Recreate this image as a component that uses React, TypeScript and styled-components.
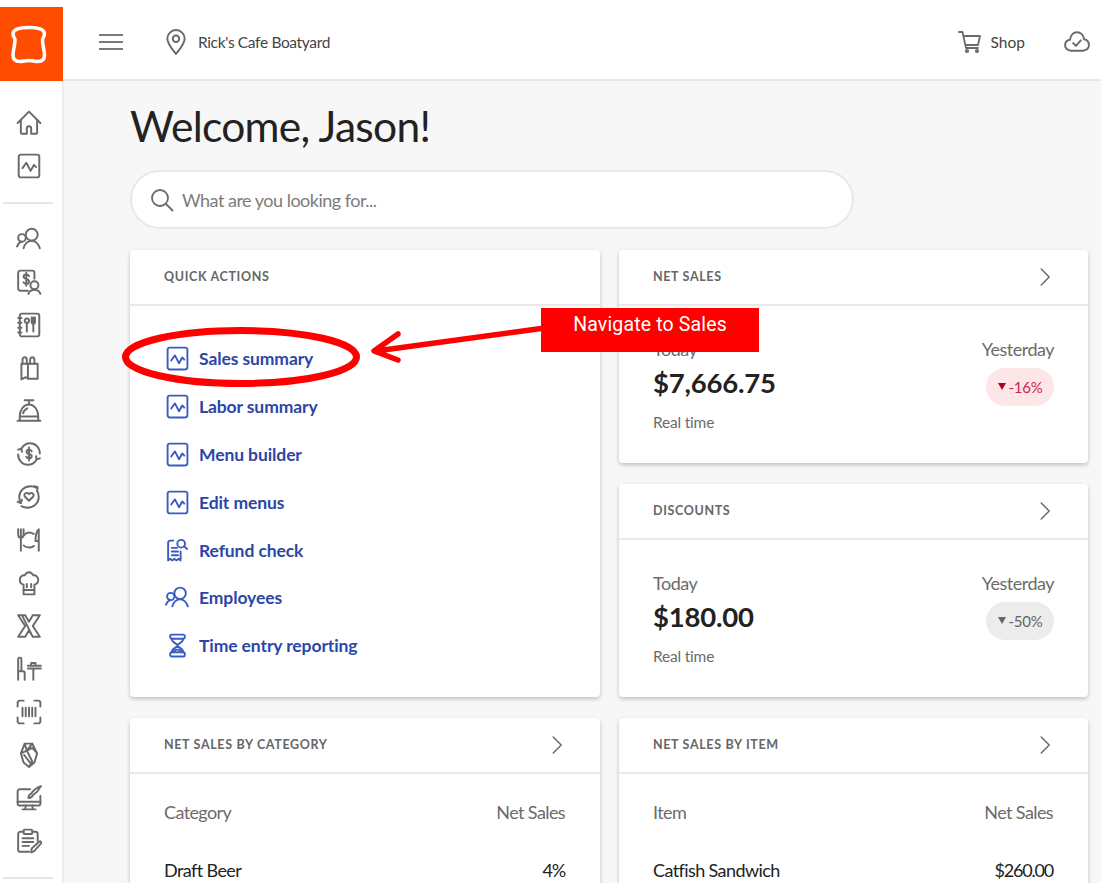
import React from "react";
import styled, { createGlobalStyle } from "styled-components";

const GlobalStyle = createGlobalStyle`
  html, body {
    margin: 0;
    height: 100%;
    background: #fff;
    overflow: hidden;
  }
  * {
    box-sizing: border-box;
  }
`;

const Frame = styled.div`
  position: relative;
  width: 1101px;
  height: 883px;
  padding-top: 7px;
  overflow: hidden;
  display: flex;
  flex-direction: column;
  font-family: "Lato", "Noto Sans", sans-serif;
  color: #222;
`;

const TopBar = styled.header`
  flex: none;
  height: 74px;
  display: flex;
  align-items: center;
  background: #fff;
  border-bottom: 2px solid #e8e8e8;
  padding-right: 11px;
  padding-bottom: 2px;
`;

const Logo = styled.div`
  width: 63px;
  height: 74px;
  margin-bottom: -4px;
  background: #ff4c00;
  align-self: flex-start;
`;

const Burger = styled.svg`
  margin-left: 36px;
  width: 24px;
  height: 18px;
`;

const Location = styled.div`
  display: flex;
  align-items: center;
  gap: 9px;
  margin-left: 40px;
  font-size: 15.5px;
  letter-spacing: -0.35px;
  color: #444;
`;

const TopRight = styled.div`
  margin-left: auto;
  display: flex;
  align-items: center;
`;

const Shop = styled.div`
  display: flex;
  align-items: center;
  gap: 9px;
  margin-right: 39px;
  font-size: 15.5px;
  color: #444;
`;

const Body = styled.div`
  flex: 1;
  display: flex;
  min-height: 0;
`;

const SideBar = styled.nav`
  flex: none;
  width: 64px;
  padding-top: 20px;
  background: #fff;
  border-right: 2px solid #ececec;
  display: flex;
  flex-direction: column;
`;

const SideItem = styled.div`
  flex: none;
  height: 43px;
  padding-right: 5px;
  display: flex;
  align-items: center;
  justify-content: center;
`;

const SideDivider = styled.hr<{ $top: number; $bottom: number }>`
  flex: none;
  width: 50px;
  height: 2px;
  margin: ${({ $top }) => $top}px 0 ${({ $bottom }) => $bottom}px 3px;
  border: 0;
  background: #e6e6e6;
`;

const Main = styled.main`
  flex: 1;
  min-width: 0;
  background: #f7f7f7;
  padding: 19px 13px 0 66px;
`;

const Title = styled.h1`
  margin: 0 0 17px;
  height: 53px;
  font-size: 42.5px;
  line-height: 51px;
  font-weight: 400;
  letter-spacing: -0.7px;
  color: #222;
`;

const Search = styled.div`
  width: 724px;
  height: 59px;
  padding-left: 18px;
  display: flex;
  align-items: center;
  gap: 8px;
  background: #fff;
  border: 2px solid #e8e8e8;
  border-radius: 30px;
  font-size: 18px;
  letter-spacing: -0.5px;
  color: #7c7c7c;
`;

const Grid = styled.div`
  margin-top: 21px;
  display: grid;
  grid-template-columns: 470px 469px;
  grid-template-rows: 213px 213px auto;
  gap: 21px 19px;
`;

const Card = styled.section<{ $span?: number }>`
  grid-row: span ${({ $span }) => $span ?? 1};
  background: #fff;
  border-radius: 4px;
  box-shadow: 0 2px 4px rgba(0, 0, 0, 0.22);
  min-height: 165px;
`;

const CardHeader = styled.div`
  height: 56px;
  padding: 0 33px 0 34px;
  display: flex;
  align-items: center;
  justify-content: space-between;
  border-bottom: 2px solid #e8e8e8;
`;

const CardTitle = styled.h2`
  margin: 0;
  font-size: 12.5px;
  line-height: 14px;
  font-weight: 700;
  letter-spacing: 0.65px;
  text-transform: uppercase;
  color: #666;
`;

const ActionList = styled.ul`
  margin: 0;
  padding: 29px 34px 0 35px;
  list-style: none;
`;

const ActionRow = styled.li`
  height: 47.8px;
  display: flex;
  align-items: center;
  gap: 9px;
  font-size: 17.5px;
  font-weight: 700;
  letter-spacing: -0.1px;
  color: #2c46a8;
`;

const StatBody = styled.div`
  padding: 31px 34px 0;
  display: flex;
  justify-content: space-between;
`;

const StatColumn = styled.div<{ $end?: boolean }>`
  display: flex;
  flex-direction: column;
  align-items: ${({ $end }) => ($end ? "flex-end" : "flex-start")};
`;

const StatLabel = styled.div`
  height: 24px;
  font-size: 18px;
  line-height: 24px;
  letter-spacing: -0.5px;
  color: #6b6b6b;
`;

const StatValue = styled.div`
  margin-top: 4px;
  height: 36px;
  font-size: 27.5px;
  line-height: 36px;
  font-weight: 700;
  letter-spacing: -0.2px;
  color: #222;
`;

const StatNote = styled.div`
  margin-top: 10px;
  font-size: 15.5px;
  line-height: 22px;
  letter-spacing: -0.2px;
  color: #6b6b6b;
`;

const Badge = styled.div<{ $tone: "down" | "flat" }>`
  margin-top: 7px;
  height: 38px;
  width: 68px;
  padding-bottom: 1px;
  display: flex;
  align-items: center;
  justify-content: center;
  gap: 3px;
  border-radius: 19px;
  font-size: 15px;
  letter-spacing: -0.3px;
  background: ${({ $tone }) => ($tone === "down" ? "#fde6e8" : "#ececec")};
  color: ${({ $tone }) => ($tone === "down" ? "#d0244a" : "#666")};
`;

const Triangle = styled.span<{ $tone: "down" | "flat" }>`
  width: 0;
  height: 0;
  border-left: 4.5px solid transparent;
  border-right: 4.5px solid transparent;
  border-top: 7px solid ${({ $tone }) => ($tone === "down" ? "#b00020" : "#666")};
`;

const TableBody = styled.div`
  padding: 25px 35px 0 34px;
`;

const TableRow = styled.div<{ $head?: boolean }>`
  height: ${({ $head }) => ($head ? 58 : 30)}px;
  display: flex;
  justify-content: space-between;
  font-size: 18px;
  line-height: 26px;
  letter-spacing: -0.6px;
  color: ${({ $head }) => ($head ? "#6b6b6b" : "#222")};
`;

const Amount = styled.span`
  letter-spacing: -1.2px;
`;

const Annotation = styled.svg`
  position: absolute;
  left: 0;
  top: 0;
  pointer-events: none;
`;

const Callout = styled.div`
  position: absolute;
  left: 541px;
  top: 308px;
  width: 218px;
  height: 44px;
  padding-top: 5px;
  background: #f00;
  color: #fff;
  font-family: "Roboto", sans-serif;
  font-size: 19.5px;
  line-height: 24px;
  letter-spacing: 0.15px;
  text-align: center;
`;

const Glyph = styled.svg<{ $color?: string; $size?: number }>`
  flex: none;
  width: ${({ $size }) => $size ?? 26}px;
  height: ${({ $size }) => $size ?? 26}px;
  fill: none;
  stroke: ${({ $color }) => $color ?? "#6a6a6a"};
  stroke-width: 1.8;
  stroke-linecap: round;
  stroke-linejoin: round;
`;

type IconProps = { color?: string; size?: number; children: React.ReactNode };

const Icon = ({ color, size, children }: IconProps) => (
  <Glyph viewBox="0 0 24 24" $color={color} $size={size}>
    {children}
  </Glyph>
);

const home = <path d="M1.5 12 12 1.5 22.5 12M4.5 9.5V21a1 1 0 0 0 1 1H10v-5a2 2 0 0 1 4 0v5h4.500a1 1 0 0 0 1-1V9.500" />;
const pulse = (
  <>
    <rect x="2.5" y="1.5" width="19" height="21" rx="2" />
    <path d="m6 14 3.500-5 4 7.500 3-5.500 2 2" />
  </>
);
const people = (
  <>
    <circle cx="14.5" cy="8" r="5.5" />
    <circle cx="5.5" cy="11" r="3.5" />
    <path d="M7 20.500c1-4 3-6.500 7.500-7 3.500.5 6 2.500 7.500 7M1 19c.5-2 1.500-3.500 4-4.500" />
  </>
);
const dollarPerson = (
  <>
    <path d="M11 20H4a2 2 0 0 1-2-2V3.500a2 2 0 0 1 2-2h11a2 2 0 0 1 2 2V9" />
    <path d="M12 6.500c-.5-1-1.500-1.500-2.500-1.500C8 5 7 5.800 7 7s1 1.800 2.500 2.200S12 10.300 12 11.500 11 13.800 9.500 13.800c-1 0-2-.5-2.500-1.500M9.500 3.500v12" />
    <circle cx="17" cy="15" r="3.700" />
    <path d="M11.500 23c.5-2 2-3.500 5.500-3.800 3.500.3 5 1.800 5.500 3.800" />
  </>
);
const menuBook = (
  <>
    <rect x="3.500" y="1.500" width="18" height="21" rx="2" />
    <path d="M2 5.500h3M2 10h3M2 14.500h3M2 19h3" />
    <circle cx="10" cy="8" r="2" />
    <path d="M10 10v8M14.500 5v4c0 1.500 1 2 1.500 2s1.500-.5 1.500-2V5M16 5v13" />
  </>
);
const bottles = (
  <>
    <path d="M6 8V4.500C6 3 7 2 8 2s2 1 2 2.500V8M13 8V4.500C13 3 14 2 15 2s2 1 2 2.500V8" />
    <path d="M5 8h15v14H11L9 20.500 5 22.500zM11 8v14" />
  </>
);
const bell = (
  <>
    <path d="M8 2h8M12 2v4M3.500 17C3.500 11 7 6 12 6s8.500 5 8.500 11" />
    <path d="M1.500 21h21M3.500 17h17M3.500 17v4M20.500 17v4M6.500 14c.5-2 2-3.500 4-4.500" />
  </>
);
const refund = (
  <>
    <path d="M5 7C7 3.500 10 2 13 2c5 0 9 4 9 9.500M19 17c-2 3.500-5 5-8 5-5 0-9-4-9-9.500" />
    <path d="M2 8l3-1 .5 3M22 16l-3 1-.5-3" />
    <path d="M14.500 9.500C14 8.500 13 8 12 8c-1.300 0-2.300.8-2.300 2s1 1.700 2.300 2 2.500.8 2.500 2-1 2-2.500 2c-1 0-2-.5-2.500-1.500M12 6v12" />
  </>
);
const heartLoop = (
  <>
    <path d="M19 3.500C17 2.300 15 2 13.500 2 7.500 2 3 6.500 3 12c0 2 .5 4 1.500 5.500M5 20.500c2 1.200 4 1.500 5.500 1.500 6 0 10.500-4.500 10.500-10 0-2-.5-4-1.500-5.500" />
    <path d="M17 2l3 1-.5 3.500M1.500 16.500l3 1 1-3" />
    <path d="M12 15.500 8.500 12c-1-1-1-2.500 0-3.300s2.500-.7 3.500.8c1-1.500 2.500-1.600 3.500-.8s1 2.300 0 3.300z" />
  </>
);
const plate = (
  <>
    <path d="M2 2v5c0 2 1 3 2.500 3S7 9 7 7V2M4.500 2v20M21 22V2c-2 2-3 6-3 11h3" />
    <path d="M7.500 7.500C9 5.500 10.500 5 12 5s3 .5 4.500 1.500M7 17c1.500 1.500 3 2 5 2s3-.3 4.500-1.500" />
  </>
);
const chef = (
  <>
    <path d="M7 13.500C4.500 13 3.500 11 3.500 9c0-3 2.500-4.500 4.500-4 1-2 2.500-3 4-3s3 1 4 3c2-.5 4.500 1 4.500 4 0 2-1 4-3.500 4.500v9H7z" />
    <path d="M7 18.500h10M10 13v3M14 13v3" />
  </>
);
const crossMark = <path d="M2 2h6.500l3.500 6 3.500-6H22l-6.500 10L22 22h-6.500L12 16l-3.500 6H2l6.500-10zM5.500 2l10 20" />;
const desk = (
  <>
    <path d="M2 22V3c0-1 .7-1.500 1.500-1.500S5 2 5 3v9.500c0 1-.5 1.500-1 1.500M2 14h4.500c1 0 1.500.5 1.500 1.500V22" />
    <path d="M11 9h12M11 11.500h12M16 11.500V22M14 9V6.500h4V9" />
  </>
);
const barcode = (
  <>
    <path d="M1.500 7V3.500a2 2 0 0 1 2-2H7M17 1.500h3.500a2 2 0 0 1 2 2V7M22.500 17v3.500a2 2 0 0 1-2 2H17M7 22.500H3.500a2 2 0 0 1-2-2V17" />
    <path d="M6 8v8M9 8v8M12 8v8M15 8v8M18 8v8" />
  </>
);
const crystal = (
  <path d="M8 1.500h7l4.500 9L17 19l-5 4-5-4-2.500-8.500zM8 1.500l2 6.500 5 10-3 5M15 1.500 10 8l-5.500 2.500M10 8l5-2.500 4.500 5M7.500 12l5.500 7" />
);
const monitor = (
  <>
    <path d="M13 4H3.500a2 2 0 0 0-2 2v11a2 2 0 0 0 2 2h17a2 2 0 0 0 2-2V10" />
    <path d="M1.500 15.500h21M9 19l-.5 3.500M15 19l.5 3.500M6 22.500h12" />
    <path d="M23 1c-3 1-7 4-9 7-1.500.5-2.500 2-2.500 4 2 0 3.500-.8 4-2.500 3-2 6-5.500 7.500-8.500z" />
  </>
);
const clipboard = (
  <>
    <path d="M7 3.500H4a2 2 0 0 0-2 2V20a2 2 0 0 0 2 2h8M15 3.500h3a2 2 0 0 1 2 2V12" />
    <rect x="7" y="1.500" width="8" height="4" rx="1" />
    <path d="M6 9.500h10M6 13h10M6 16.500h6M14 22.500l.5-3.500 7-6.500c1-.7 2.500.8 1.500 2l-6.500 7z" />
  </>
);
const receipt = (
  <>
    <path d="M8 2.500H5a2 2 0 0 0-2 2v17l2-1.500 2 1.500 2-1.500 2 1.500 2-1.500 2 1.500V13" />
    <path d="M6.500 9.500h5M6.500 13h6M6.500 16.500h6" />
    <circle cx="15.500" cy="5.500" r="3.700" />
    <path d="m18.300 8 3 2.500" />
  </>
);
const hourglass = (
  <>
    <rect x="5" y="1.500" width="14" height="4" rx="1.500" />
    <rect x="5" y="18.500" width="14" height="4" rx="1.500" />
    <path d="M6.500 5.500c0 4 5.500 4.500 5.500 6.500s-5.500 2.500-5.500 6.500M17.500 5.500c0 4-5.500 4.500-5.500 6.500s5.500 2.500 5.500 6.500" />
    <path d="M8 18.500c1-2 3-2.500 4-2.500s3 .5 4 2.500" />
  </>
);

const topNav = [home, pulse];
const lowerNav = [
  people,
  dollarPerson,
  menuBook,
  bottles,
  bell,
  refund,
  heartLoop,
  plate,
  chef,
  crossMark,
  desk,
  barcode,
  crystal,
  monitor,
  clipboard,
];

const actions = [
  { label: "Sales summary", icon: pulse },
  { label: "Labor summary", icon: pulse },
  { label: "Menu builder", icon: pulse },
  { label: "Edit menus", icon: pulse },
  { label: "Refund check", icon: receipt },
  { label: "Employees", icon: people },
  { label: "Time entry reporting", icon: hourglass },
];

const Chevron = () => (
  <Icon size={20}>
    <path d="m7.500 2.500 9.500 9.500-9.500 9.500" />
  </Icon>
);

type StatProps = {
  title: string;
  value: string;
  change: string;
  tone: "down" | "flat";
};

const StatCard = ({ title, value, change, tone }: StatProps) => (
  <Card>
    <CardHeader>
      <CardTitle>{title}</CardTitle>
      <Chevron />
    </CardHeader>
    <StatBody>
      <StatColumn>
        <StatLabel>Today</StatLabel>
        <StatValue>{value}</StatValue>
        <StatNote>Real time</StatNote>
      </StatColumn>
      <StatColumn $end>
        <StatLabel>Yesterday</StatLabel>
        <Badge $tone={tone}>
          <Triangle $tone={tone} />
          {change}
        </Badge>
      </StatColumn>
    </StatBody>
  </Card>
);

type TableProps = {
  title: string;
  column: string;
  name: string;
  amount: string;
  heading: string;
};

const TableCard = ({ title, column, name, amount, heading }: TableProps) => (
  <Card>
    <CardHeader>
      <CardTitle>{title}</CardTitle>
      <Chevron />
    </CardHeader>
    <TableBody>
      <TableRow $head>
        <span>{heading}</span>
        <span>{column}</span>
      </TableRow>
      <TableRow>
        <span>{name}</span>
        <Amount>{amount}</Amount>
      </TableRow>
    </TableBody>
  </Card>
);

export default function App() {
  return (
    <Frame>
      <GlobalStyle />
      <TopBar>
        <Logo>
          <svg width="58" height="74" viewBox="0 0 58 74" fill="none">
            <path
              d="M29 20.500C20 20.500 13 22 13 27c0 3 2.500 3.500 2 7-.5 6-2 10-2 14 0 5 3 6.500 7 6.500 4 0 5-1 9-1s5 1 9 1c4 0 6.500-1.500 6.500-6.500 0-4-1.500-8-2-14-.5-3.500 2-4 2-7 0-5-6.500-6.500-15.500-6.500Z"
              stroke="#fff"
              strokeWidth="3.500"
            />
          </svg>
        </Logo>
        <Burger viewBox="0 0 24 18">
          <path d="M0 2h24M0 9h24M0 16h24" stroke="#7a7a7a" strokeWidth="2" />
        </Burger>
        <Location>
          <Icon size={26}>
            <path d="M12 23c-4-5-8-9.500-8-14a8 8 0 0 1 16 0c0 4.500-4 9-8 14Z" />
            <circle cx="12" cy="9" r="3" />
          </Icon>
          Rick's Cafe Boatyard
        </Location>
        <TopRight>
          <Shop>
            <Icon size={24}>
              <path d="M1 2h3.500l3.500 16h12M5.500 6H22l-2 9H7.500" />
              <circle cx="9" cy="21" r="1.200" />
              <circle cx="19" cy="21" r="1.200" />
            </Icon>
            Shop
          </Shop>
          <Icon size={26}>
            <path d="M6.500 20C3.500 20 1 17.800 1 15c0-2.500 1.800-4.500 4.500-5C6 6 8.500 3 12 3c3.500 0 6 2.700 6.500 6.500 2.800.5 4.500 2.800 4.500 5.500 0 2.800-2.500 5-5.500 5Z" />
            <path d="m8.500 13 2.500 2.500 4.500-5" />
          </Icon>
        </TopRight>
      </TopBar>
      <Body>
        <SideBar>
          {topNav.map((icon, i) => (
            <SideItem key={i}>
              <Icon>{icon}</Icon>
            </SideItem>
          ))}
          <SideDivider $top={15} $bottom={13} />
          {lowerNav.map((icon, i) => (
            <SideItem key={i}>
              <Icon>{icon}</Icon>
            </SideItem>
          ))}
          <SideDivider $top={15} $bottom={0} />
        </SideBar>
        <Main>
          <Title>Welcome, Jason!</Title>
          <Search>
            <Icon size={24}>
              <circle cx="10" cy="10" r="8" />
              <path d="m16 16 6.500 6.500" />
            </Icon>
            What are you looking for...
          </Search>
          <Grid>
            <Card $span={2}>
              <CardHeader>
                <CardTitle>Quick actions</CardTitle>
              </CardHeader>
              <ActionList>
                {actions.map((action) => (
                  <ActionRow key={action.label}>
                    <Icon size={25} color="#3a5cc0">
                      {action.icon}
                    </Icon>
                    {action.label}
                  </ActionRow>
                ))}
              </ActionList>
            </Card>
            <StatCard title="Net sales" value="$7,666.75" change="-16%" tone="down" />
            <StatCard title="Discounts" value="$180.00" change="-50%" tone="flat" />
            <TableCard
              title="Net sales by category"
              heading="Category"
              column="Net Sales"
              name="Draft Beer"
              amount="4%"
            />
            <TableCard
              title="Net sales by item"
              heading="Item"
              column="Net Sales"
              name="Catfish Sandwich"
              amount="$260.00"
            />
          </Grid>
        </Main>
      </Body>
      <Annotation width="1101" height="883" viewBox="0 0 1101 883" fill="none">
        <ellipse cx="241" cy="357" rx="115.500" ry="26.500" stroke="#f00" strokeWidth="7" />
        <path
          d="M545 328 376 351M398 334l-24 17 24 9"
          stroke="#f00"
          strokeWidth="5.500"
          strokeLinecap="round"
          strokeLinejoin="round"
        />
      </Annotation>
      <Callout>Navigate to Sales</Callout>
    </Frame>
  );
}
